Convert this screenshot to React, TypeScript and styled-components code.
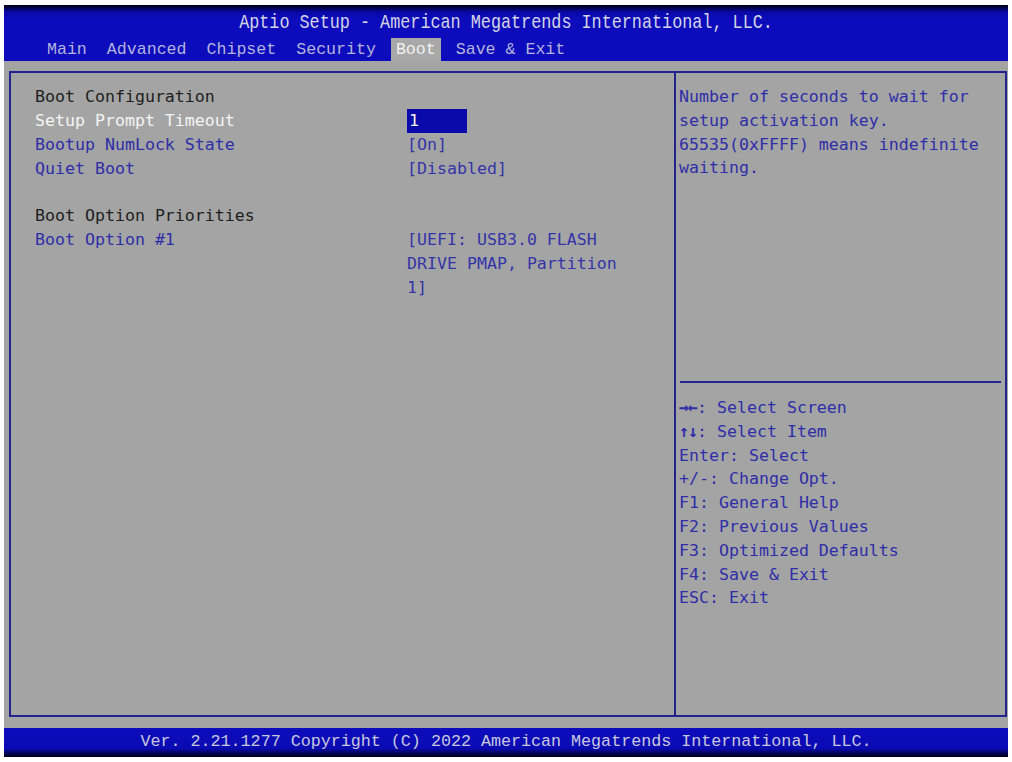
import React from 'react'
import styled, { createGlobalStyle } from 'styled-components'

const GlobalStyle = createGlobalStyle`
  html, body {
    margin: 0;
    padding: 0;
    background: #ffffff;
  }
`

const Screen = styled.div`
  box-sizing: border-box;
  width: 1004px;
  height: 752px;
  margin: 5px 4px;
  display: flex;
  flex-direction: column;
  background: #a4a4a4;
  font-family: 'DejaVu Sans Mono', 'Liberation Mono', monospace;
`

const Header = styled.div`
  height: 56px;
  display: flex;
  flex-direction: column;
  align-items: stretch;
  background: linear-gradient(to bottom, #000010 0px, #0808a8 7px, #0c0cbc 14px, #0c0cbc 100%);
  color: #d4d4e4;
`

const Title = styled.div`
  height: 30px;
  line-height: 30px;
  padding-top: 3px;
  text-align: center;
  font-family: 'Liberation Mono', monospace;
  font-size: 16.8px;
  transform: scaleY(1.15);
`

const TabRow = styled.div`
  display: flex;
  align-items: stretch;
  gap: 10px;
  padding-left: 38px;
  flex: 1;
`

const Tab = styled.div<{ $active?: boolean }>`
  padding: 0 5px;
  display: flex;
  align-items: center;
  font-family: 'Liberation Mono', monospace;
  font-size: 16.6px;
  color: ${p => (p.$active ? '#f2f2f2' : '#b4b4dc')};
  background: ${p => (p.$active ? '#a8a8a8' : 'transparent')};
`

const Body = styled.div`
  flex: 1;
  padding: 10px 1px 11px 5px;
  display: flex;
`

const Frame = styled.div`
  flex: 1;
  box-sizing: border-box;
  border: 2px solid #23238e;
  display: grid;
  grid-template-columns: 663px 2px 1fr;
`

const Divider = styled.div`
  background: #23238e;
`

const Left = styled.div`
  padding: 12px 0 0 24px;
  font-size: 16.6px;
  line-height: 23.8px;
`

const Row = styled.div`
  display: grid;
  grid-template-columns: 372px 222px;
`

const Label = styled.div<{ $tone: 'head' | 'item' | 'focus' }>`
  color: ${p => (p.$tone === 'head' ? '#1e1e1e' : p.$tone === 'focus' ? '#f4f4f4' : '#2e2ea8')};
`

const Value = styled.div`
  color: #3434a8;
`

const Focused = styled.span`
  display: inline-block;
  width: 60px;
  height: 24px;
  box-sizing: border-box;
  padding-left: 2px;
  background: #0a0aaa;
  color: #f4f4f4;
`

const Gap = styled.div`
  height: 23.8px;
`

const Right = styled.div`
  display: flex;
  flex-direction: column;
  font-size: 16.6px;
  line-height: 23.8px;
  color: #2e2ea8;
`

const Help = styled.div`
  height: 308px;
  padding: 12px 4px 0 3px;
  box-sizing: border-box;
`

const Rule = styled.div`
  height: 2px;
  margin: 0 4px;
  background: #23238e;
`

const Keys = styled.div`
  padding: 13px 0 0 3px;
`

const Arrow = styled.span`
  font-weight: bold;
  letter-spacing: -1px;
`

const Footer = styled.div`
  height: 29px;
  display: flex;
  align-items: center;
  justify-content: center;
  padding-bottom: 2px;
  box-sizing: border-box;
  background: linear-gradient(to bottom, #0c0cbc 0%, #0a0ab4 70%, #000014 100%);
  color: #c8c8dc;
  font-family: 'Liberation Mono', monospace;
  font-size: 16.7px;
  transform-origin: center;
`

const tabs = ['Main', 'Advanced', 'Chipset', 'Security', 'Boot', 'Save & Exit']

const keys = [
  'Enter: Select',
  '+/-: Change Opt.',
  'F1: General Help',
  'F2: Previous Values',
  'F3: Optimized Defaults',
  'F4: Save & Exit',
  'ESC: Exit',
]

export default function App() {
  return (
    <>
      <GlobalStyle />
      <Screen>
        <Header>
          <Title>Aptio Setup - American Megatrends International, LLC.</Title>
          <TabRow>
            {tabs.map(t => (
              <Tab key={t} $active={t === 'Boot'}>
                {t}
              </Tab>
            ))}
          </TabRow>
        </Header>
        <Body>
          <Frame>
            <Left>
              <Row>
                <Label $tone="head">Boot Configuration</Label>
              </Row>
              <Row>
                <Label $tone="focus">Setup Prompt Timeout</Label>
                <Value>
                  <Focused>1</Focused>
                </Value>
              </Row>
              <Row>
                <Label $tone="item">Bootup NumLock State</Label>
                <Value>[On]</Value>
              </Row>
              <Row>
                <Label $tone="item">Quiet Boot</Label>
                <Value>[Disabled]</Value>
              </Row>
              <Gap />
              <Row>
                <Label $tone="head">Boot Option Priorities</Label>
              </Row>
              <Row>
                <Label $tone="item">Boot Option #1</Label>
                <Value>[UEFI: USB3.0 FLASH DRIVE PMAP, Partition 1]</Value>
              </Row>
            </Left>
            <Divider />
            <Right>
              <Help>
                Number of seconds to wait for setup activation key. 65535(0xFFFF) means indefinite
                waiting.
              </Help>
              <Rule />
              <Keys>
                <div>
                  <Arrow>→←</Arrow>: Select Screen
                </div>
                <div>
                  <Arrow>↑↓</Arrow>: Select Item
                </div>
                {keys.map(k => (
                  <div key={k}>{k}</div>
                ))}
              </Keys>
            </Right>
          </Frame>
        </Body>
        <Footer>Ver. 2.21.1277 Copyright (C) 2022 American Megatrends International, LLC.</Footer>
      </Screen>
    </>
  )
}
